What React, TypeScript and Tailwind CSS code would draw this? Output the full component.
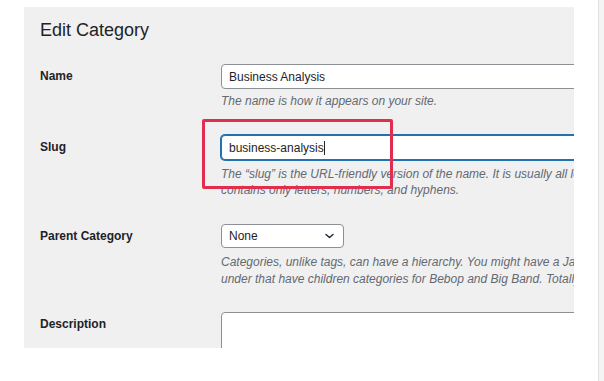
import React from "react";

const Chevron = () => (
  <svg width="9" height="6" viewBox="0 0 9 6" className="text-[#1d2327]">
    <polyline
      points="1,1.5 4.5,4.5 8,1.5"
      fill="none"
      stroke="currentColor"
      strokeWidth="1.4"
      strokeLinecap="round"
      strokeLinejoin="round"
    />
  </svg>
);

const App = () => {
  return (
    <div
      className="flex w-[604px] h-[381px] bg-white text-[#1d2327]"
      style={{ fontFamily: '"Liberation Sans", Arial, sans-serif' }}
    >
      <div className="ml-[24px] mt-[7px] w-[550px] h-[341px] bg-[#f0f0f1] overflow-hidden relative pl-[16px] pt-[11px]">
        <h1 className="text-[18px] leading-[24px] font-normal">Edit Category</h1>

        {/* Name */}
        <div className="flex mt-[22px]">
          <div className="w-[181px] shrink-0 pt-[4px] text-[12px] leading-[16px] font-bold">Name</div>
          <div className="shrink-0">
            <div className="w-[420px] h-[25px] bg-white border border-[#8c8f94] rounded-[4px] px-[7px] flex items-center text-[12px]">
              Business Analysis
            </div>
            <p className="mt-[4px] text-[12px] leading-[16px] italic text-[#646970]">
              The name is how it appears on your site.
            </p>
          </div>
        </div>

        {/* Slug */}
        <div className="flex mt-[26px]">
          <div className="w-[181px] shrink-0 pt-[4px] text-[12px] leading-[16px] font-bold">Slug</div>
          <div className="shrink-0">
            <div className="w-[420px] h-[25px] bg-white border border-[#2271b1] ring-1 ring-[#2271b1] rounded-[4px] px-[7px] flex items-center text-[12px]">
              business-analysis
              <span className="inline-block w-px h-[14px] bg-[#1d2327]" />
            </div>
            <p className="mt-[6px] text-[12px] leading-[16px] italic text-[#646970] whitespace-nowrap">
              The “slug” is the URL-friendly version of the name. It is usually all lowercase and
            </p>
            <p className="text-[12px] leading-[16px] italic text-[#646970]">
              contains only letters, numbers, and hyphens.
            </p>
          </div>
        </div>

        {/* Parent Category */}
        <div className="flex mt-[26px]">
          <div className="w-[181px] shrink-0 pt-[4px] text-[12px] leading-[16px] font-bold">Parent Category</div>
          <div className="shrink-0">
            <div className="w-[123px] h-[24px] bg-white border border-[#8c8f94] rounded-[4px] pl-[7px] pr-[9px] flex items-center justify-between text-[12px]">
              <span>None</span>
              <Chevron />
            </div>
            <p className="mt-[6px] text-[12px] leading-[17px] italic text-[#646970] whitespace-nowrap">
              Categories, unlike tags, can have a hierarchy. You might have a Jazz category, and
            </p>
            <p className="text-[12px] leading-[17px] italic text-[#646970] whitespace-nowrap">
              under that have children categories for Bebop and Big Band. Totally optional.
            </p>
          </div>
        </div>

        {/* Description */}
        <div className="flex mt-[24px]">
          <div className="w-[181px] shrink-0 pt-[4px] text-[12px] leading-[16px] font-bold">Description</div>
          <div className="shrink-0 w-[420px] h-[80px] bg-white border border-[#8c8f94] rounded-[4px]" />
        </div>

        {/* highlight annotation */}
        <div className="absolute left-[178px] top-[112px] w-[191px] h-[70px] border-[3px] border-[#e12d4e] rounded-[2px]" />
      </div>

      <div className="ml-[24px] w-px h-full bg-[#e2e2e4]" />
      <div className="flex-1 h-full bg-[#f4f4f5]" />
    </div>
  );
};

export default App;
